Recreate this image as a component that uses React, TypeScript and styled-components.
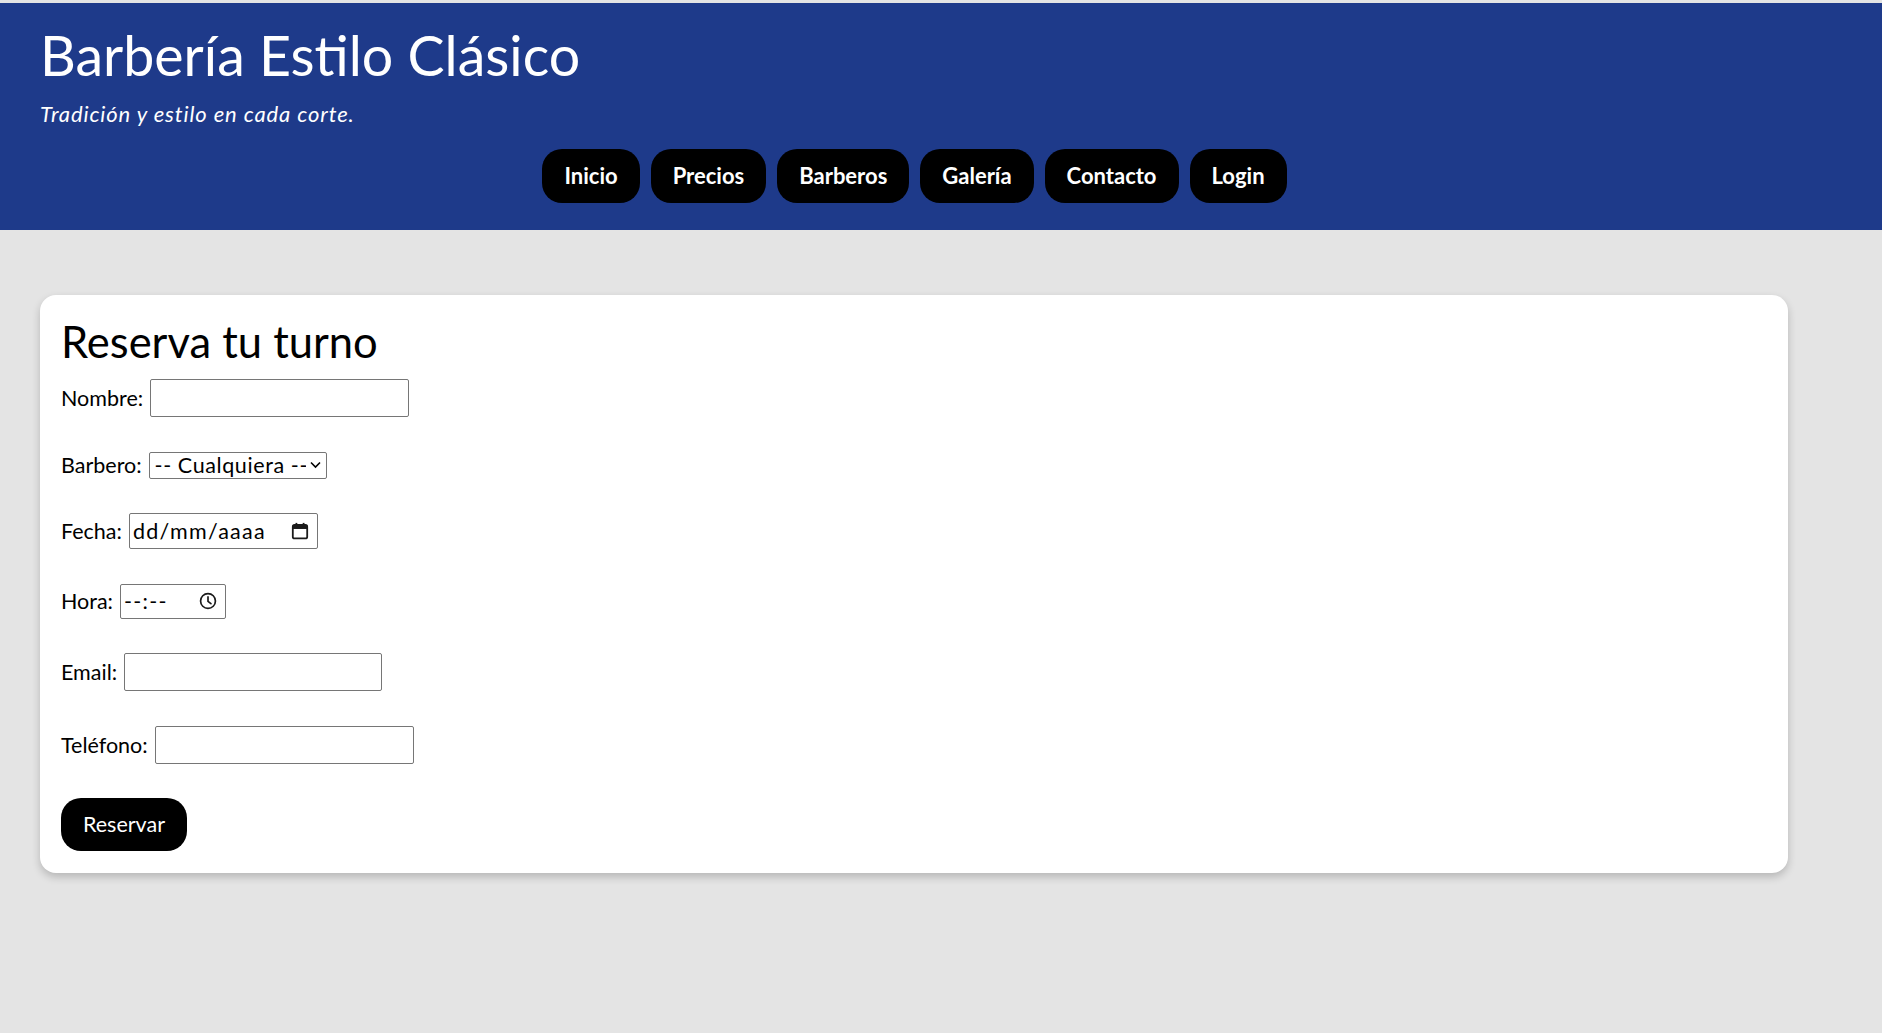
import styled, { createGlobalStyle } from "styled-components";

const GlobalStyle = createGlobalStyle`
  html, body {
    margin: 0;
    padding: 0;
  }
  body {
    background: #e4e4e4;
    font-family: Lato, "Open Sans", sans-serif;
    color: #000;
  }
`;

const Page = styled.div`
  padding-top: 3px;
  min-height: 1030px;
`;

const Header = styled.header`
  background: #1e3a8a;
  color: #fff;
  padding: 25px 40px 27px;
`;

const Title = styled.h1`
  margin: 0;
  font-size: 55.5px;
  font-weight: 400;
  line-height: 54px;
`;

const Tagline = styled.p`
  margin: 20px 0 0;
  font-size: 22px;
  font-style: italic;
  letter-spacing: 0.9px;
  line-height: 24px;
`;

const Nav = styled.nav`
  display: flex;
  justify-content: center;
  gap: 11px;
  margin-top: 23px;
  padding-right: 53px;
`;

const NavLink = styled.a`
  display: block;
  background: #000;
  color: #fff;
  text-decoration: none;
  font-size: 22px;
  font-weight: 700;
  line-height: 24px;
  padding: 15px 22px;
  border-radius: 20px;
`;

const Main = styled.main`
  padding: 65px 94px 40px 40px;
`;

const Card = styled.section`
  background: #fff;
  border-radius: 16px;
  box-shadow: 0 4px 8px rgba(0, 0, 0, 0.2);
  padding: 22px 22px 22px 21px;
`;

const CardTitle = styled.h2`
  margin: 0 0 14px;
  font-size: 43.5px;
  font-weight: 400;
  line-height: 48px;
`;

const Form = styled.form`
  display: flex;
  flex-direction: column;
  align-items: flex-start;
  gap: 34.5px;
`;

const Row = styled.div`
  display: flex;
  align-items: center;
  gap: 7px;
`;

const Label = styled.label`
  font-size: 21.5px;
  line-height: 24px;
`;

const TextInput = styled.input<{ $w: number }>`
  box-sizing: border-box;
  width: ${(p) => p.$w}px;
  height: 38px;
  border: 1px solid #767676;
  border-radius: 2px;
  padding: 0 4px;
  font: inherit;
  font-size: 21px;
  background: #fff;
`;

const SelectWrap = styled.div`
  position: relative;
`;

const Select = styled.select`
  appearance: none;
  box-sizing: border-box;
  width: 178px;
  height: 27px;
  border: 1px solid #767676;
  border-radius: 2px;
  padding: 0 20px 0 5px;
  font-family: inherit;
  font-size: 21.5px;
  letter-spacing: 0.6px;
  line-height: 25px;
  color: #000;
  background: #fff;
`;

const Chevron = styled.svg`
  position: absolute;
  right: 6px;
  top: 9px;
  pointer-events: none;
`;

const FakeField = styled.div<{ $w: number; $h: number }>`
  box-sizing: border-box;
  display: flex;
  align-items: center;
  justify-content: space-between;
  width: ${(p) => p.$w}px;
  height: ${(p) => p.$h}px;
  border: 1px solid #767676;
  border-radius: 2px;
  padding: 0 8px 0 3px;
  font-size: 21.5px;
  letter-spacing: 1.3px;
  background: #fff;
`;

const Submit = styled.button`
  background: #000;
  color: #fff;
  border: none;
  border-radius: 20px;
  font-family: inherit;
  font-size: 21.5px;
  line-height: 25px;
  padding: 14px 22px;
  cursor: pointer;
`;

const navItems = ["Inicio", "Precios", "Barberos", "Galería", "Contacto", "Login"];

function CalendarIcon() {
  return (
    <svg width="18" height="18" viewBox="0 0 16 16" fill="none">
      <rect x="1.6" y="2.6" width="12.8" height="12" rx="1.6" stroke="#1a1a1a" strokeWidth="1.6" />
      <rect x="1.6" y="2.6" width="12.8" height="3.6" fill="#1a1a1a" />
      <rect x="4" y="0.8" width="1.6" height="3" fill="#1a1a1a" />
      <rect x="10.4" y="0.8" width="1.6" height="3" fill="#1a1a1a" />
    </svg>
  );
}

function ClockIcon() {
  return (
    <svg width="18" height="18" viewBox="0 0 16 16" fill="none">
      <circle cx="8" cy="8" r="6.6" stroke="#1a1a1a" strokeWidth="1.5" />
      <path d="M8 4.4V8.3L10.6 10.4" stroke="#1a1a1a" strokeWidth="1.5" strokeLinecap="round" />
    </svg>
  );
}

export default function App() {
  return (
    <Page>
      <GlobalStyle />
      <Header>
        <Title>Barbería Estilo Clásico</Title>
        <Tagline>Tradición y estilo en cada corte.</Tagline>
        <Nav>
          {navItems.map((item) => (
            <NavLink key={item} href="#">
              {item}
            </NavLink>
          ))}
        </Nav>
      </Header>

      <Main>
        <Card>
          <CardTitle>Reserva tu turno</CardTitle>
          <Form onSubmit={(e) => e.preventDefault()}>
            <Row>
              <Label htmlFor="nombre">Nombre:</Label>
              <TextInput id="nombre" type="text" $w={259} />
            </Row>
            <Row>
              <Label htmlFor="barbero">Barbero:</Label>
              <SelectWrap>
                <Select id="barbero" defaultValue="">
                  <option value="">-- Cualquiera --</option>
                </Select>
                <Chevron width="11" height="8" viewBox="0 0 11 8">
                  <path d="M1 1.5L5.5 6L10 1.5" stroke="#000" strokeWidth="1.6" fill="none" />
                </Chevron>
              </SelectWrap>
            </Row>
            <Row>
              <Label>Fecha:</Label>
              <FakeField $w={189} $h={36}>
                <span>dd/mm/aaaa</span>
                <CalendarIcon />
              </FakeField>
            </Row>
            <Row>
              <Label>Hora:</Label>
              <FakeField $w={106} $h={35}>
                <span>--:--</span>
                <ClockIcon />
              </FakeField>
            </Row>
            <Row>
              <Label htmlFor="email">Email:</Label>
              <TextInput id="email" type="email" $w={258} />
            </Row>
            <Row>
              <Label htmlFor="tel">Teléfono:</Label>
              <TextInput id="tel" type="tel" $w={259} />
            </Row>
            <Submit type="submit">Reservar</Submit>
          </Form>
        </Card>
      </Main>
    </Page>
  );
}
